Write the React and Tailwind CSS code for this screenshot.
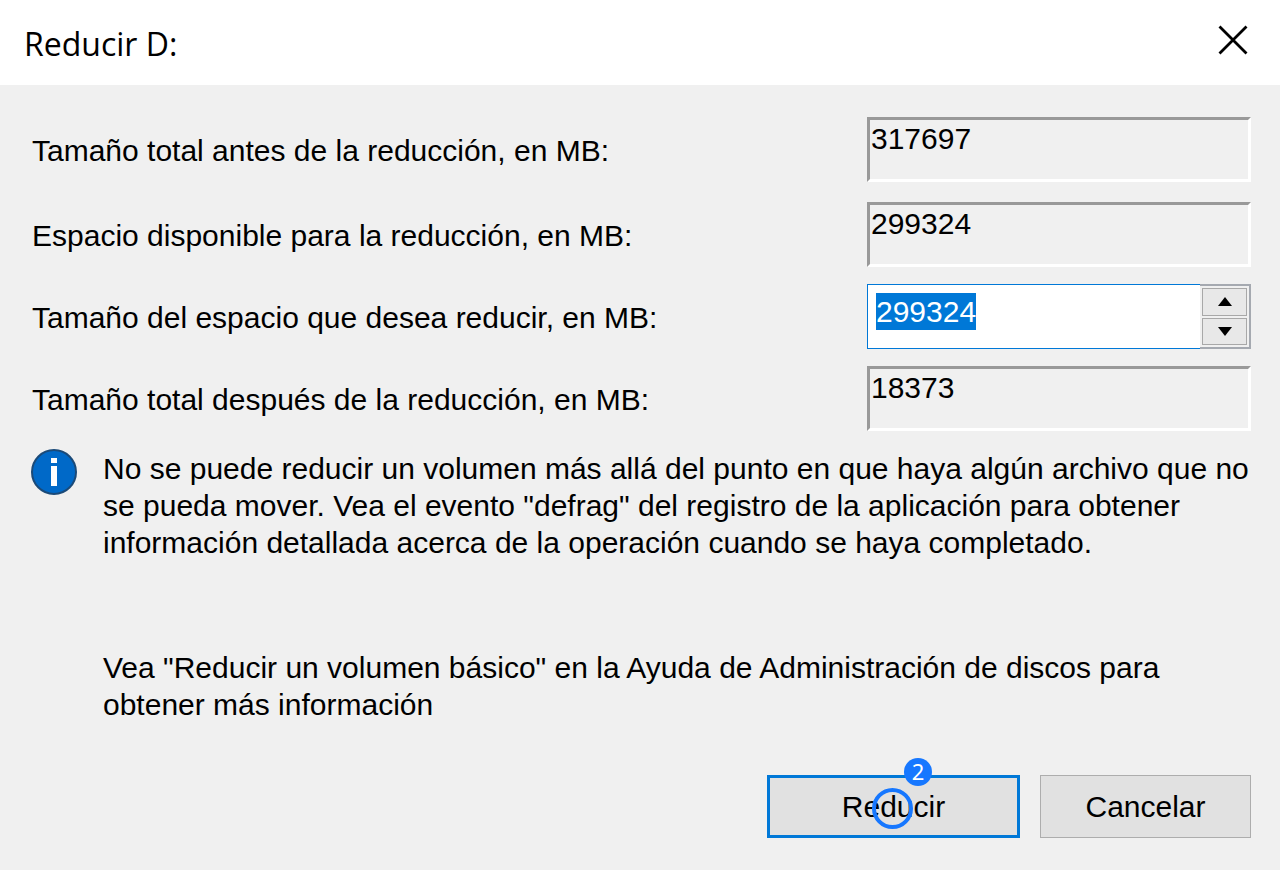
import React, { useEffect, useRef, useState } from 'react'

const TOTAL_BEFORE = 317697
const AVAILABLE = 299324

const InfoIcon = () => (
  <svg viewBox="0 0 48 48" className="w-12 h-12 shrink-0" aria-hidden="true">
    <circle cx="24" cy="24" r="22" fill="#0069c8" stroke="#1b4a78" strokeWidth="2" />
    <rect x="21" y="10" width="6" height="5" fill="#fff" />
    <rect x="21" y="18" width="6" height="20" fill="#fff" />
  </svg>
)

const ReadOnlyRow = ({ id, label, value }) => (
  <div className="flex items-center justify-between">
    <label htmlFor={id} className="pt-0.5">{label}</label>
    <div className="w-[384px] h-[65px] border-3 border-t-[#999] border-l-[#999] border-r-white border-b-white">
      <input
        id={id}
        readOnly
        value={value}
        className="block w-full h-[37px] pl-px leading-[37px] bg-transparent outline-none"
      />
    </div>
  </div>
)

const App = () => {
  const [amount, setAmount] = useState(AVAILABLE)
  const inputRef = useRef(null)

  // The amount starts focused and fully selected
  useEffect(() => {
    inputRef.current.focus()
    inputRef.current.select()
  }, [])

  const step = (delta) => setAmount((n) => Math.min(AVAILABLE, Math.max(1, Number(n) + delta)))

  return (
    <div className="min-h-screen flex flex-col bg-[#f0f0f0] text-black text-[30px] leading-[37px] font-['Liberation_Sans',Arial,sans-serif]">
      {/* Title bar */}
      <header className="h-[85px] pl-6 pr-8 flex items-center justify-between bg-white">
        <h1 className="pt-0.5 text-[32px] font-['Open_Sans','Segoe_UI',sans-serif]">Reducir D:</h1>
        <button type="button" aria-label="Cerrar" className="pb-1.5">
          <svg viewBox="0 0 30 30" className="w-[30px] h-[30px]">
            <path d="M1.5 1.5 28.5 28.5M28.5 1.5 1.5 28.5" stroke="#000" strokeWidth="2.8" fill="none" />
          </svg>
        </button>
      </header>

      <main className="flex-1 flex flex-col pt-8 pb-8">
        {/* Sizes */}
        <div className="flex flex-col gap-[17px] pl-8 pr-[29px]">
          <div className="flex flex-col gap-5">
            <ReadOnlyRow id="before" label="Tamaño total antes de la reducción, en MB:" value={TOTAL_BEFORE} />
            <ReadOnlyRow id="available" label="Espacio disponible para la reducción, en MB:" value={AVAILABLE} />
          </div>
          <div className="flex items-center justify-between">
            <label htmlFor="amount" className="pt-0.5">Tamaño del espacio que desea reducir, en MB:</label>
            <div className="flex w-[384px] h-[65px]">
              <div className="flex-1 pt-2 pl-2 bg-white border border-r-0 border-[#0078d7]">
                <input
                  id="amount"
                  ref={inputRef}
                  value={amount}
                  onChange={(e) => setAmount(e.target.value)}
                  className="block w-full h-[37px] leading-[37px] bg-transparent outline-none selection:bg-[#0078d7] selection:text-white"
                />
              </div>
              <div className="w-[51px] flex flex-col gap-[2px] py-[2px] pl-[2px] pr-[2px] border-t-2 border-b-2 border-r-2 border-[#a5a9b0] bg-[#f0f0f0]">
                <button type="button" aria-label="Aumentar" onClick={() => step(1)} className="flex-1 flex items-center justify-center bg-[#e8e8e8] border border-[#a8a8a8]">
                  <svg viewBox="0 0 14 9" className="w-[14px] h-[9px]"><path d="M7 0 14 9H0Z" /></svg>
                </button>
                <button type="button" aria-label="Disminuir" onClick={() => step(-1)} className="flex-1 flex items-center justify-center bg-[#e8e8e8] border border-[#a8a8a8]">
                  <svg viewBox="0 0 14 9" className="w-[14px] h-[9px]"><path d="M7 9 14 0H0Z" /></svg>
                </button>
              </div>
            </div>
          </div>
          <ReadOnlyRow id="after" label="Tamaño total después de la reducción, en MB:" value={TOTAL_BEFORE - amount} />
        </div>

        {/* Notes */}
        <div className="flex gap-[25px] mt-[17px] pl-[30px] pr-5">
          <InfoIcon />
          <div className="flex flex-col gap-[88px] pt-0.5">
            <p>
              No se puede reducir un volumen más allá del punto en que haya algún archivo que no
              se pueda mover. Vea el evento "defrag" del registro de la aplicación para obtener
              información detallada acerca de la operación cuando se haya completado.
            </p>
            <p>
              Vea "Reducir un volumen básico" en la Ayuda de Administración de discos para
              obtener más información
            </p>
          </div>
        </div>

        {/* Actions */}
        <div className="flex justify-end gap-5 mt-auto pr-[29px]">
          <button type="button" className="relative w-[253px] h-[63px] bg-[#e1e1e1] border-3 border-[#0078d7]">
            Reducir
            <span className="absolute left-[102px] top-[10px] w-[41px] h-[41px] rounded-full border-4 border-[#1677ff]" />
            <span className="absolute left-[134px] -top-5 w-7 h-7 rounded-full bg-[#1677ff] text-white text-[22px] leading-[26px] font-['Noto_Sans',sans-serif]">
              2
            </span>
          </button>
          <button type="button" className="w-[211px] h-[63px] bg-[#e1e1e1] border border-[#adadad]">
            Cancelar
          </button>
        </div>
      </main>
    </div>
  )
}

export default App
